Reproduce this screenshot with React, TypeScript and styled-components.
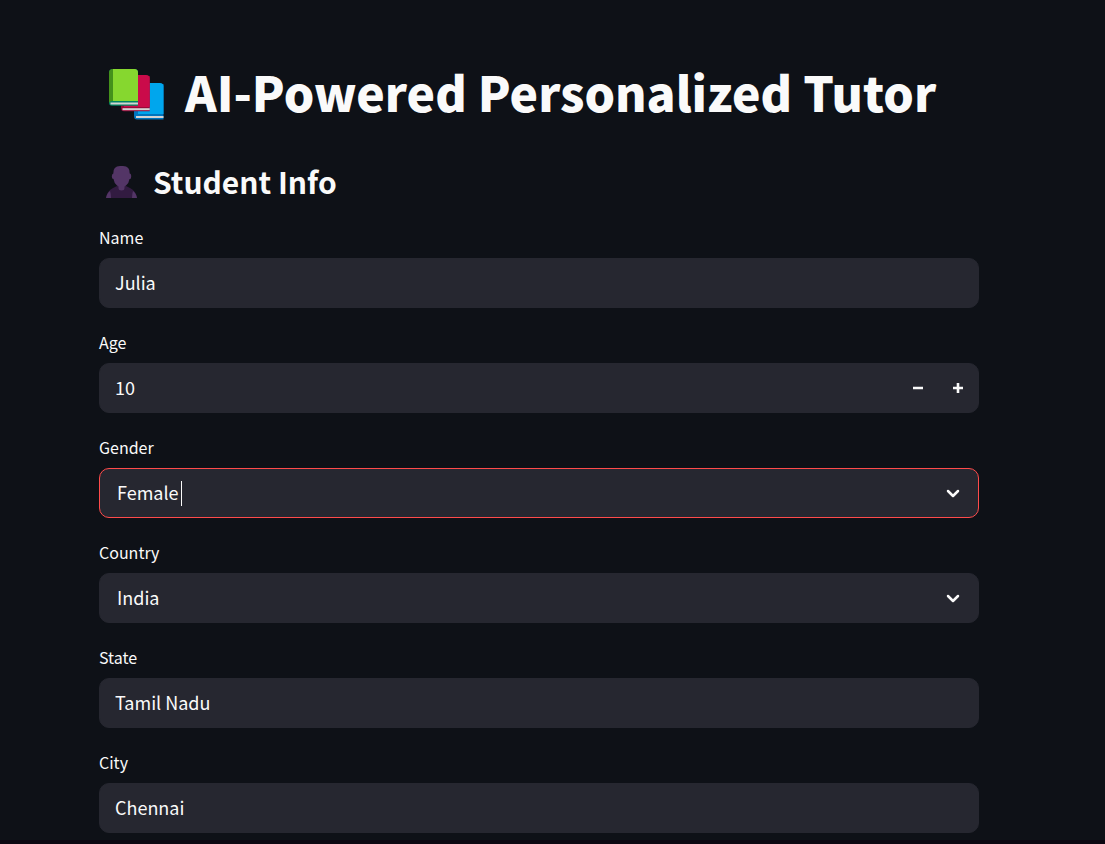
import React, { useState } from "react";
import styled, { createGlobalStyle, css } from "styled-components";

const GlobalStyle = createGlobalStyle`
  *, *::before, *::after { box-sizing: border-box; }
  body {
    margin: 0;
    background: #0e1117;
    color: #fafafa;
    font-family: "Source Sans Pro", "Noto Sans CJK SC", sans-serif;
    overflow-x: hidden;
  }
`;

const Page = styled.main`
  padding: 57px 51px 0 24px;
`;

const Form = styled.form`
  display: flex;
  flex-direction: column;
  max-width: 880px;
  margin: 0 auto;
`;

const Title = styled.h1`
  display: flex;
  align-items: center;
  gap: 16px;
  margin: 0;
  padding-left: 5px;
  font-size: 48px;
  font-weight: 900;
  line-height: 68px;
  white-space: nowrap;
`;

const Subtitle = styled.h3`
  display: flex;
  align-items: center;
  gap: 14px;
  margin: 34px 0 20px;
  padding-left: 6px;
  font-size: 30px;
  font-weight: 700;
  line-height: 44px;
`;

const Fields = styled.div`
  display: flex;
  flex-direction: column;
  gap: 20px;
`;

const FieldGroup = styled.div`
  display: flex;
  flex-direction: column;
  gap: 8px;
`;

const Label = styled.label`
  align-self: flex-start;
  padding-top: 2px;
  font-size: 16px;
  line-height: 25px;
`;

const Control = styled.div<{ $active?: boolean }>`
  position: relative;
  display: flex;
  align-items: center;
  height: 50px;
  border: 1px solid ${(p) => (p.$active ? "#ff4b4b" : "#262730")};
  border-radius: 10px;
  background: #262730;
  overflow: hidden;
`;

const controlText = css`
  flex: 1;
  min-width: 0;
  height: 100%;
  margin: 0;
  border: 0;
  outline: 0;
  background: transparent;
  color: #fafafa;
  font: inherit;
  font-size: 18px;
  line-height: 28px;
`;

const TextInput = styled.input`
  ${controlText}
  padding: 0 15px 2px;
  appearance: textfield;
  &::-webkit-inner-spin-button { display: none; }
`;

const SelectInput = styled.select`
  ${controlText}
  padding: 0 48px 2px 17px;
  appearance: none;
`;

const StepButton = styled.button`
  display: flex;
  align-items: center;
  justify-content: center;
  width: 40px;
  height: 100%;
  padding: 0;
  border: 0;
  background: transparent;
  color: inherit;
`;

const Chevron = styled.svg`
  position: absolute;
  right: 15px;
  pointer-events: none;
`;

const Caret = styled.span`
  position: absolute;
  left: 81px;
  width: 1px;
  height: 25px;
  background: #fafafa;
  pointer-events: none;
`;

const BottomEdge = styled.div`
  height: 4px;
  margin-top: 7px;
  background: #0c0611;
`;

function Books() {
  return (
    <svg width="65" height="62" viewBox="0 0 65 62" aria-hidden="true">
      <path d="M30 24h29.500v35.500H33q-3 0-3-3.500z" fill="#0074bd" />
      <path d="M34 23h22q3.500 0 3.500 3.500V54H34z" fill="#00a6ed" />
      <rect x="32" y="56" width="27.500" height="2" fill="#d3d3d3" />
      <path d="M17 16h28.700v35.300H20q-3 0-3-3.500z" fill="#990838" />
      <path d="M20 15h22.200q3.500 0 3.500 3.500V47H20z" fill="#ca0b4a" />
      <rect x="18.500" y="48.200" width="27.200" height="2" fill="#d3d3d3" />
      <path d="M5 12.500q0-3.500 3.500-3.500h22q3.500 0 3.500 3.500V45.700H8q-3 0-3-3z" fill="#008463" />
      <path d="M9 9h21.500q3.500 0 3.500 3.500V41H9z" fill="#86d72f" />
      <path d="M5 12.500Q5 9 9 9v32H8q-2 0-3 1.500z" fill="#44911b" />
      <rect x="6.500" y="42.500" width="27.500" height="2" fill="#d3d3d3" />
    </svg>
  );
}

function Bust() {
  return (
    <svg width="34" height="36" viewBox="0 -1 34 36" aria-hidden="true">
      <path d="M1 34q1-7 7-10l4-2h9l4 2q6 3 7 10z" fill="#321b41" />
      <path d="M1 34q1-5 4-7 1 3 1 7zM32 34q-1-5-4-7-1 3-1 7z" fill="#533566" />
      <path d="M8.300 9.500Q8 2 15 2h3q7 0 6.700 7.500 1.500 0 1.500 3T24.500 15q-.5 4-3.500 6.500l-1.500 1V24q0 2.500-3 2.500t-3-2.500v-1.500l-1.500-1Q9 19 8.500 15q-1.700 0-1.700-2.500t1.500-3z" fill="#533566" />
    </svg>
  );
}

function DownIcon() {
  return (
    <Chevron width="20" height="20" viewBox="0 0 20 20" aria-hidden="true">
      <path d="M5 8l5 5 5-5" fill="none" stroke="#fafafa" strokeWidth="2.5" strokeLinecap="round" strokeLinejoin="round" />
    </Chevron>
  );
}

function Field({ id, label, active, children }: {
  id: string;
  label: string;
  active?: boolean;
  children: React.ReactNode;
}) {
  return (
    <FieldGroup>
      <Label htmlFor={id}>{label}</Label>
      <Control $active={active}>{children}</Control>
    </FieldGroup>
  );
}

export default function App() {
  const [age, setAge] = useState(10);
  return (
    <>
      <GlobalStyle />
      <Page>
        <Form>
          <Title><Books />AI-Powered Personalized Tutor</Title>
          <Subtitle><Bust />Student Info</Subtitle>
          <Fields>
            <Field id="name" label="Name">
              <TextInput id="name" defaultValue="Julia" />
            </Field>
            <Field id="age" label="Age">
              <TextInput id="age" type="number" value={age} onChange={(e) => setAge(Number(e.target.value))} />
              <StepButton type="button" aria-label="Decrease age" onClick={() => setAge(age - 1)}>
                <svg width="10" height="10" viewBox="0 0 10 10"><path d="M0 3.700h10v2.600H0z" fill="currentColor" /></svg>
              </StepButton>
              <StepButton type="button" aria-label="Increase age" onClick={() => setAge(age + 1)}>
                <svg width="10" height="10" viewBox="0 0 10 10"><path d="M0 3.700h3.700V0h2.600v3.700H10v2.600H6.300V10H3.700V6.300H0z" fill="currentColor" /></svg>
              </StepButton>
            </Field>
            <Field id="gender" label="Gender" active>
              <SelectInput id="gender" defaultValue="Female">
                <option>Female</option>
                <option>Male</option>
              </SelectInput>
              <Caret />
              <DownIcon />
            </Field>
            <Field id="country" label="Country">
              <SelectInput id="country" defaultValue="India">
                <option>India</option>
              </SelectInput>
              <DownIcon />
            </Field>
            <Field id="state" label="State">
              <TextInput id="state" defaultValue="Tamil Nadu" />
            </Field>
            <Field id="city" label="City">
              <TextInput id="city" defaultValue="Chennai" />
            </Field>
          </Fields>
        </Form>
      </Page>
      <BottomEdge />
    </>
  );
}
